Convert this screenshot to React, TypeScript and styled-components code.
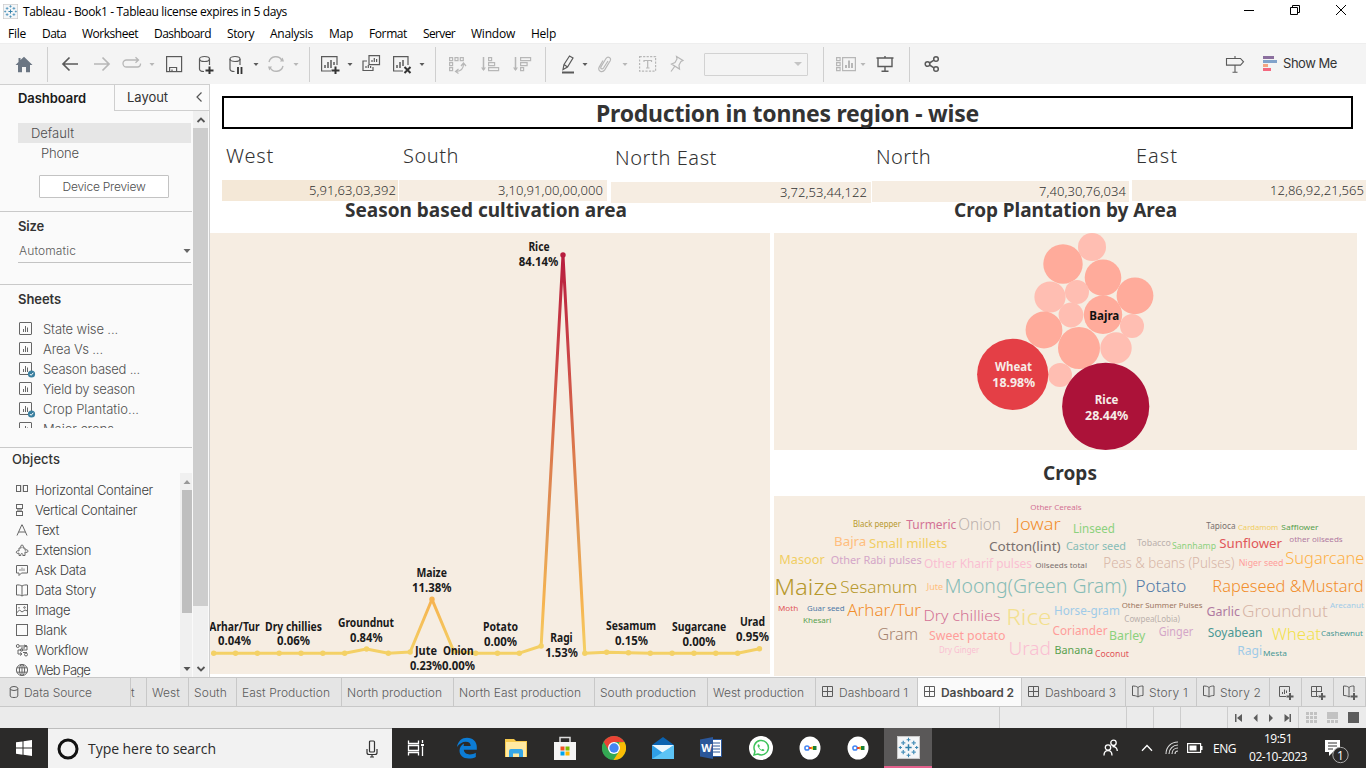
import React, { useLayoutEffect, useRef } from "react";
import styled, { createGlobalStyle } from "styled-components";

const UI = `"Inter", "Roboto", sans-serif`;
const VIZ = `"Noto Sans", "Open Sans", sans-serif`;
const WIN = `"Open Sans", "Noto Sans", sans-serif`;

const Global = createGlobalStyle`
  * { box-sizing: border-box; }
  body { margin: 0; background: #fff; font-family: ${UI}; overflow: hidden; }
  svg { display: block; flex: none; }
`;

/* Text tracked so that it fills a given width. */
const Tracked = styled.span`
  display: inline-block;
  white-space: pre;
  flex: none;
`;
function Fit({ w, children }: { w: number; children: string }) {
  const ref = useRef<HTMLSpanElement>(null);
  useLayoutEffect(() => {
    const el = ref.current;
    if (!el) return;
    el.style.letterSpacing = "0px";
    const natural = el.getBoundingClientRect().width;
    el.style.letterSpacing = `${(w - natural) / children.length}px`;
  }, [w, children]);
  return <Tracked ref={ref}>{children}</Tracked>;
}

const Screen = styled.div`
  width: 1366px;
  height: 768px;
  display: flex;
  flex-direction: column;
  overflow: hidden;
  background: #fff;
`;

/* ---------- title bar and menu ---------- */
const TitleBar = styled.header`
  height: 23px;
  flex: none;
  display: flex;
  align-items: center;
  padding-left: 3px;
  font: 12px ${WIN};
  color: #000;
`;
const TitleText = styled.div`
  margin-left: 5px;
  flex: 1;
`;
const WindowButtons = styled.div`
  display: flex;
  gap: 34px;
  padding: 0 19px 3px 0;
`;
const MenuBar = styled.nav`
  height: 20px;
  flex: none;
  display: flex;
  align-items: center;
  padding: 2px 0 0 8px;
  font: 12px ${WIN};
  color: #000;
`;
const MenuItem = styled.div<{ $w: number }>`
  width: ${(p) => p.$w}px;
  line-height: 18px;
`;
const menu: [string, number, number][] = [
  ["File", 34, 18], ["Data", 40, 24], ["Worksheet", 72, 56], ["Dashboard", 73, 57], ["Story", 43, 27],
  ["Analysis", 59, 43], ["Map", 40, 24], ["Format", 54, 38], ["Server", 48, 32], ["Window", 60, 44], ["Help", 40, 25],
];

/* ---------- toolbar ---------- */
const ToolBar = styled.div`
  height: 41px;
  flex: none;
  background: #f4f4f4;
  border-top: 1px solid #eee;
  display: flex;
  align-items: center;
`;
const Tool = styled.div<{ $ml: number; $dim?: boolean }>`
  margin-left: ${(p) => p.$ml}px;
  color: ${(p) => (p.$dim ? "#b7b7b7" : "#5a5a5a")};
  flex: none;
`;
const Rule = styled.div<{ $ml: number }>`
  margin-left: ${(p) => p.$ml}px;
  width: 1px;
  height: 35px;
  background: #cfcfcf;
  flex: none;
`;
const Combo = styled.div`
  margin-left: 17px;
  width: 104px;
  height: 23px;
  border: 1px solid #d2d2d2;
  border-radius: 1px;
  display: flex;
  align-items: center;
  justify-content: flex-end;
  padding-right: 5px;
  color: #c4c4c4;
  flex: none;
`;
const ShowMe = styled.div`
  margin-left: 6px;
  padding-bottom: 2px;
  font: 13px ${UI};
  color: #333;
`;
const Arrow = ({ ml, dim }: { ml: number; dim?: boolean }) => (
  <Tool $ml={ml} $dim={dim}>
    <svg width="8" height="20" viewBox="0 0 8 20"><path d="M1.5 9h5L4 12z" fill="currentColor" /></svg>
  </Tool>
);
function Icon({ ml, dim, sw = 1.2, children }: { ml: number; dim?: boolean; sw?: number; children: React.ReactNode }) {
  return (
    <Tool $ml={ml} $dim={dim}>
      <svg width="20" height="20" viewBox="0 0 20 20" fill="none" stroke="currentColor" strokeWidth={sw}>{children}</svg>
    </Tool>
  );
}

/* ---------- main split ---------- */
const Main = styled.div`
  height: 593px;
  flex: none;
  display: flex;
`;
const SidePane = styled.aside`
  width: 210px;
  flex: none;
  background: #fafafa;
  border-right: 1px solid #cfcfcf;
  border-top: 1px solid #cfcfcf;
  display: flex;
  flex-direction: column;
  font: 350 13px ${UI};
  color: #4e4e4e;
`;
const PaneTabs = styled.div`
  display: flex;
  height: 26px;
  flex: none;
`;
const PaneTab = styled.div<{ $active?: boolean }>`
  width: ${(p) => (p.$active ? "114px" : "95px")};
  padding: 0 6px 1px ${(p) => (p.$active ? 18 : 12)}px;
  display: flex;
  align-items: center;
  justify-content: space-between;
  font-weight: ${(p) => (p.$active ? 600 : 400)};
  color: ${(p) => (p.$active ? "#1a1a1a" : "#333")};
  border-left: ${(p) => (p.$active ? 0 : "1px solid #cfcfcf")};
  border-bottom: ${(p) => (p.$active ? 0 : "1px solid #cfcfcf")};
`;
const PaneBody = styled.div`
  display: flex;
  flex: 1;
  min-height: 0;
`;
const PaneContent = styled.div`
  width: 192px;
  flex: none;
  overflow: hidden;
`;
const PaneScroll = styled.div`
  width: 15px;
  margin-left: 1px;
  background: #f0f0f0;
  display: flex;
  flex-direction: column;
  color: #555;
`;
const ScrollThumb = styled.div<{ $h: number; $c: string }>`
  height: ${(p) => p.$h}px;
  background: ${(p) => p.$c};
`;
const ScrollEnd = styled.div<{ $h: number }>`
  height: ${(p) => p.$h}px;
  display: flex;
  align-items: center;
  justify-content: center;
`;
const Section = styled.section<{ $h: number }>`
  height: ${(p) => p.$h}px;
  border-bottom: 1px solid #c9c9c9;
  overflow: hidden;
`;
const Devices = styled.div`
  margin: 12px 1px 0 18px;
`;
const DeviceRow = styled.div<{ $on?: boolean }>`
  height: 20px;
  line-height: 20px;
  padding-left: ${(p) => (p.$on ? 13 : 23)}px;
  background: ${(p) => (p.$on ? "#e6e6e6" : "transparent")};
`;
const PreviewButton = styled.button`
  display: block;
  width: 130px;
  height: 23px;
  margin: 12px 0 0 39px;
  padding: 0 0 1px;
  border: 1px solid #c3c3c3;
  border-radius: 1px;
  background: #fff;
  font: 350 12px ${UI};
  color: #4e4e4e;
`;
const Heading = styled.div<{ $ml: number; $h?: number; $soft?: boolean }>`
  margin-left: ${(p) => p.$ml}px;
  height: ${(p) => p.$h ?? 29}px;
  line-height: ${(p) => (p.$soft ? 23 : 29)}px;
  font-weight: ${(p) => (p.$soft ? 500 : 600)};
  color: #333;
`;
const SizeSelect = styled.div`
  margin-left: 18px;
  width: 173px;
  height: 22px;
  border-bottom: 1px solid #c3c3c3;
  display: flex;
  align-items: center;
  justify-content: space-between;
  padding: 0 0 2px 1px;
  font-size: 12px;
  color: #5a5a5a;
`;
const SheetList = styled.div`
  margin: 5px 0 0 18px;
  height: 109px;
  overflow: hidden;
`;
const SheetRow = styled.div`
  height: 20px;
  display: flex;
  align-items: center;
  gap: 7px;
  color: #505050;
`;
const ObjectsArea = styled.div`
  display: flex;
  height: 204px;
  justify-content: space-between;
`;
const ObjectList = styled.div`
  padding: 7px 0 0 15px;
`;
const ObjectRow = styled.div`
  height: 20px;
  display: flex;
  align-items: center;
  gap: 6px;
  color: #3c3c3c;
`;
const InnerScroll = styled.div`
  width: 12px;
  background: #f0f0f0;
  padding-left: 2px;
  color: #999;
`;

/* ---------- dashboard canvas ---------- */
const Canvas = styled.main`
  flex: 1;
  display: flex;
  flex-direction: column;
  font-family: ${VIZ};
  overflow: hidden;
`;
const DashTitle = styled.h1`
  margin: 12px 13px 0 12px;
  height: 33px;
  flex: none;
  border: 2px solid #000;
  display: flex;
  align-items: center;
  justify-content: center;
  font-size: 23px;
  font-weight: 700;
  color: #333;
`;
const Regions = styled.div`
  height: 72px;
  flex: none;
  padding-left: 12px;
  display: flex;
`;
const Region = styled.div<{ $w: number; $dy: number }>`
  width: ${(p) => p.$w}px;
  flex: none;
  padding-top: ${(p) => p.$dy}px;
`;
const RegionName = styled.div`
  height: 51px;
  line-height: 54px;
  padding-left: 4px;
  font-size: 20px;
  font-weight: 300;
  color: #333;
`;
const RegionValue = styled.div<{ $w: number; $pr: number; $c: string }>`
  width: ${(p) => p.$w}px;
  height: 21px;
  padding-right: ${(p) => p.$pr}px;
  background: ${(p) => p.$c};
  text-align: right;
  line-height: 21px;
  font-size: 13px;
  font-weight: 350;
  color: #333;
`;
const Charts = styled.div`
  flex: 1;
  display: flex;
  gap: 4px;
  min-height: 0;
`;
const ChartColumn = styled.div<{ $w: number }>`
  width: ${(p) => p.$w}px;
  flex: none;
  display: flex;
  flex-direction: column;
`;
const ChartTitle = styled.h2<{ $h: number; $pl: number; $lh: number }>`
  margin: 0;
  height: ${(p) => p.$h}px;
  line-height: ${(p) => p.$lh}px;
  padding-left: ${(p) => p.$pl}px;
  font-size: 19px;
  font-weight: 700;
  color: #333;
`;

type Lbl = [string, number, number, number];
const lineLabels: Lbl[] = [
  ["Rice", 528.4, 549.6, 251], ["84.14%", 518.8, 558.4, 266],
  ["Arhar/Tur", 209.3, 259.7, 630.5], ["0.04%", 218, 251, 645],
  ["Dry chillies", 265, 322, 630.5], ["0.06%", 277, 310, 645],
  ["Groundnut", 338, 394, 627.3], ["0.84%", 350, 382.5, 642],
  ["Maize", 416.4, 447, 577.3], ["11.38%", 412, 451.5, 592.3],
  ["Jute", 415, 437, 655.3], ["0.23%", 410, 442, 670],
  ["Onion", 443, 473.5, 655.3], ["0.00%", 442, 475, 670],
  ["Potato", 483, 518, 631.3], ["0.00%", 484, 517, 646],
  ["Ragi", 550.3, 572.7, 642.3], ["1.53%", 545.2, 577.8, 657.3],
  ["Sesamum", 606, 656.2, 630.3], ["0.15%", 615, 648, 645],
  ["Sugarcane", 672, 726.3, 631.3], ["0.00%", 682.6, 715.6, 646],
  ["Urad", 740, 765, 626.3], ["0.95%", 736, 769, 641],
];
const level: Record<number, number> = { 7: 649, 9: 652, 10: 599.3, 11: 651.5, 15: 646, 16: 255, 18: 652.3, 19: 652.8, 25: 648.7 };
const points = Array.from({ length: 26 }, (_, i) => [213.7 + 21.83 * i, level[i] ?? 653.2]);

function LineChart() {
  return (
    <svg width="560" height="441" viewBox="210 233 560 441">
      <defs>
        <linearGradient id="heat" gradientUnits="userSpaceOnUse" x1="0" x2="0" y1="653" y2="255">
          <stop offset="0" stopColor="#f4d166" />
          <stop offset=".13" stopColor="#f6b350" />
          <stop offset=".3" stopColor="#e29b57" />
          <stop offset=".5" stopColor="#dc7a4c" />
          <stop offset=".75" stopColor="#cb4447" />
          <stop offset="1" stopColor="#b71d3e" />
        </linearGradient>
      </defs>
      <rect x="210" y="233" width="560" height="441" fill="#f6ede2" />
      <polyline points={points.map((p) => p.join(",")).join(" ")} fill="none" stroke="url(#heat)" strokeWidth="3" strokeLinejoin="round" />
      {points.map(([x, y], i) => (
        <circle key={i} cx={x} cy={y} r="2.7" fill={y < 300 ? "#b71d3e" : y < 620 ? "#f6b350" : "#f4d166"} />
      ))}
      {lineLabels.map(([t, a, b, y], i) => (
        <text key={i} x={a} y={y} textLength={b - a} lengthAdjust="spacingAndGlyphs" fontSize="11.6" fontWeight="700" fill="#1a1a1a">{t}</text>
      ))}
    </svg>
  );
}

const bubbles: [number, number, number, string][] = [
  [1092, 247, 14, "#ffbeb2"], [1063, 264, 19.7, "#ffab9b"], [1103, 277.7, 18.3, "#ffab9b"], [1135, 295.8, 18.4, "#ffab9b"],
  [1050, 297, 15.6, "#ffbeb2"], [1077, 292, 12, "#ffbeb2"], [1071, 315, 12.4, "#ffbeb2"], [1103, 314.8, 19.2, "#ffab9b"],
  [1132, 326, 12, "#ffbeb2"], [1044, 330, 18.4, "#ffab9b"], [1079, 348, 21, "#ffab9b"], [1116, 348, 15.7, "#ffbeb2"],
  [1060, 375, 12, "#ffbeb2"], [1012.7, 374.3, 35.6, "#e43f46"], [1105.7, 406.4, 43.6, "#ac1239"],
];
const bubbleLabels: [string, number, number, number, string][] = [
  ["Bajra", 1089.3, 1119.3, 320.3, "#111"], ["Wheat", 995, 1032, 371, "#f6ece8"], ["18.98%", 992.3, 1035.3, 387.3, "#f6ece8"],
  ["Rice", 1094.7, 1118.5, 404.3, "#f6ece8"], ["28.44%", 1085, 1128.3, 420.3, "#f6ece8"],
];
function BubbleChart() {
  return (
    <svg width="583" height="217" viewBox="774 233 583 217">
      <rect x="774" y="233" width="583" height="217" fill="#f6ede2" />
      {bubbles.map(([x, y, r, c], i) => <circle key={i} cx={x} cy={y} r={r} fill={c} />)}
      {bubbleLabels.map(([t, a, b, y, c], i) => (
        <text key={i} x={a} y={y} textLength={b - a} lengthAdjust="spacingAndGlyphs" fontSize="12.3" fontWeight="700" fill={c}>{t}</text>
      ))}
    </svg>
  );
}

type Word = [string, number, number, number, number, string];
const words: Word[] = [
  ["Other Cereals", 1030.3, 1081.7, 509.8, 7.6, "#d37295"],
  ["Black pepper", 853, 901, 527.3, 8, "#b6992d"], ["Turmeric", 906.3, 956.3, 529, 12.3, "#d37295"],
  ["Onion", 958.3, 1001, 530, 16.5, "#bab0ac"], ["Jowar", 1015.3, 1060.7, 530, 16.5, "#f28e2b"],
  ["Linseed", 1073, 1115, 532.9, 12.3, "#8cd17d"], ["Tapioca", 1206.3, 1235.5, 529.3, 8.4, "#79706e"],
  ["Cardamom", 1238, 1278.3, 530, 7.8, "#f1ce63"], ["Safflower", 1281.3, 1318.5, 530, 7.8, "#59a14f"],
  ["Bajra", 834, 866.3, 546.3, 13.2, "#ffbe7d"], ["Small millets", 869, 947.3, 547.8, 12.8, "#f1ce63"],
  ["Cotton(lint)", 989, 1060.7, 551, 13, "#79706e"], ["Castor seed", 1066, 1126, 550, 11.6, "#86bcb6"],
  ["Tobacco", 1137, 1171, 546, 9.4, "#bab0ac"], ["Sannhamp", 1172, 1216, 548.8, 9.4, "#8cd17d"],
  ["Sunflower", 1219.3, 1282, 548, 13, "#e15759"], ["other oilseeds", 1289.3, 1342.7, 541.8, 7.6, "#b07aa1"],
  ["Masoor", 779.3, 824.7, 563.8, 13, "#f1ce63"], ["Other Rabi pulses", 830.7, 921.7, 563.8, 11.4, "#d4a6c8"],
  ["Other Kharif pulses", 924, 1032, 567.8, 12, "#fabfd2"], ["Oilseeds total", 1035.3, 1087, 568, 7.6, "#79706e"],
  ["Peas & beans (Pulses)", 1103.3, 1234.5, 568, 13.8, "#d7b5a6"], ["Niger seed", 1238.7, 1283.5, 566, 9.6, "#ff9d9a"],
  ["Sugarcane", 1285.3, 1364.3, 564, 16.8, "#fdb046"],
  ["Maize", 774.2, 837.7, 594.8, 22.5, "#b6992d"], ["Sesamum", 840.3, 917.3, 592.8, 17, "#b6992d"],
  ["Jute", 926.7, 943, 589.8, 8, "#ffbe7d"], ["Moong(Green Gram)", 944.5, 1126.9, 593.4, 19.3, "#86bcb6"],
  ["Potato", 1135.4, 1186.3, 592.4, 16.2, "#4e79a7"], ["Rapeseed &Mustard", 1212.3, 1363.5, 592, 16.8, "#f28e2b"],
  ["Moth", 778, 798.2, 610.8, 7.6, "#e15759"], ["Guar seed", 807, 844.5, 610.8, 7.6, "#4e79a7"],
  ["Khesari", 803, 831.2, 622.8, 7.6, "#59a14f"], ["Arhar/Tur", 847.3, 921, 615.8, 16.5, "#f28e2b"],
  ["Dry chillies", 923.5, 1000.5, 621, 14.8, "#d37295"], ["Rice", 1006.3, 1051.5, 625.4, 22, "#f3e08e"],
  ["Horse-gram", 1054, 1119.9, 615, 11.8, "#a0cbe8"], ["Other Summer Pulses", 1121.7, 1202.5, 607.8, 7.6, "#9c755f"],
  ["Cowpea(Lobia)", 1124.3, 1180, 622, 8, "#bab0ac"], ["Garlic", 1206.4, 1239.9, 616, 12, "#b07aa1"],
  ["Groundnut", 1242, 1327.9, 617, 17, "#d7b5a6"], ["Arecanut", 1330, 1363.9, 607.8, 7.6, "#a0cbe8"],
  ["Gram", 877.4, 918, 640, 16.5, "#a5836f"], ["Sweet potato", 929, 1005.5, 640, 12.2, "#ff9d9a"],
  ["Coriander", 1052.5, 1107.5, 635, 12, "#ff9d9a"], ["Barley", 1109, 1145.2, 640, 12.6, "#8cd17d"],
  ["Ginger", 1158.7, 1193.2, 636.4, 12, "#d4a6c8"], ["Soyabean", 1207.7, 1262.5, 636.8, 12.4, "#499894"],
  ["Wheat", 1271.7, 1320.9, 640.4, 17, "#f2e14c"], ["Cashewnut", 1321, 1362.9, 635.8, 7.8, "#499894"],
  ["Dry Ginger", 939, 979.2, 653, 8.2, "#fabfd2"], ["Urad", 1008.5, 1051, 654.8, 18.5, "#fabfd2"],
  ["Banana", 1054.5, 1093, 654.4, 11.6, "#59a14f"], ["Coconut", 1095, 1128.9, 656.7, 9, "#e15759"],
  ["Ragi", 1237.3, 1262.2, 655, 12.8, "#a0cbe8"], ["Mesta", 1263, 1286.9, 655.5, 7.8, "#499894"],
];
function WordCloud() {
  return (
    <svg width="591" height="180" viewBox="774 496 591 180">
      <rect x="774" y="496" width="591" height="180" fill="#f6ede2" />
      {words.map(([t, a, b, y, s, c]) => (
        <text key={t} x={a} y={y} textLength={b - a} lengthAdjust="spacingAndGlyphs" fontSize={s} fontWeight={s < 13.5 ? 400 : 350} fill={c}>{t}</text>
      ))}
    </svg>
  );
}

/* ---------- sheet tabs and status ---------- */
const TabStrip = styled.div`
  height: 30px;
  flex: none;
  display: flex;
  border-top: 1px solid #c8c8c8;
  border-bottom: 1px solid #c8c8c8;
  background: #e5e5e5;
  font: 350 12px ${UI};
`;
const Tab = styled.div<{ $w: number; $pl: number; $on?: boolean; $gap?: number }>`
  width: ${(p) => p.$w}px;
  padding-left: ${(p) => p.$pl}px;
  flex: none;
  display: flex;
  align-items: center;
  gap: ${(p) => p.$gap ?? 2}px;
  overflow: hidden;
  border-right: 1px solid #c8c8c8;
  color: ${(p) => (p.$on ? "#4a4a4a" : "#5c5c5c")};
  font-weight: ${(p) => (p.$on ? 600 : 350)};
  background: ${(p) => (p.$on ? "#fafafa" : "transparent")};
`;
const Status = styled.div`
  height: 21px;
  flex: none;
  background: #ebebeb;
  display: flex;
  justify-content: flex-end;
`;
const StatusCell = styled.div<{ $w: number }>`
  width: ${(p) => p.$w}px;
  border-left: 1px solid #cdcdcd;
  display: flex;
  align-items: center;
  justify-content: center;
`;

/* ---------- taskbar ---------- */
const TaskBar = styled.footer`
  height: 40px;
  flex: none;
  display: flex;
  background: #2b2a29;
  color: #fff;
  font: 12px ${WIN};
`;
const TaskSlot = styled.div<{ $w: number; $on?: boolean }>`
  width: ${(p) => p.$w}px;
  flex: none;
  display: flex;
  align-items: center;
  justify-content: center;
  background: ${(p) => (p.$on ? "#5a5858" : "transparent")};
  border-bottom: ${(p) => (p.$on ? "2px solid #e3608c" : "0")};
`;
const SearchBox = styled.div`
  width: 344px;
  flex: none;
  background: #f2f2f2;
  border-top: 1px solid #bdbdbd;
  display: flex;
  align-items: center;
  padding: 0 14px 0 9px;
  color: #2b2b2b;
  font-size: 14px;
`;
const SearchText = styled.div`
  flex: 1;
  margin-left: 9px;
`;
const Clock = styled.div`
  width: 72px;
  display: flex;
  flex-direction: column;
  align-items: center;
  justify-content: center;
  line-height: 18px;
`;

const TableauMark = ({ size }: { size: number }) => {
  const plus = (x: number, y: number, r: number, c: string, sw = 1) => (
    <path key={`${x}-${y}`} d={`M${x - r} ${y}h${2 * r}M${x} ${y - r}v${2 * r}`} stroke={c} strokeWidth={sw} />
  );
  return (
    <svg width={size} height={size} viewBox="0 0 22 22">
      <rect x=".5" y=".5" width="21" height="21" fill="#f4f6f8" stroke="#c9c9c9" />
      {plus(11, 11, 3, "#2f7fa8", 1.4)}
      {plus(6, 6.5, 2, "#4d93bb", 1.2)}{plus(16, 6.5, 2, "#4d93bb", 1.2)}
      {plus(6, 15.5, 2, "#4d93bb", 1.2)}{plus(16, 15.5, 2, "#4d93bb", 1.2)}
      {plus(11, 3.5, 1.8, "#3a86b0")}{plus(11, 18.5, 1.8, "#3a86b0")}
      {plus(3.2, 11, 1.5, "#3a86b0")}{plus(18.8, 11, 1.5, "#3a86b0")}
    </svg>
  );
};

const SheetIcon = ({ used }: { used?: boolean }) => (
  <svg width="18" height="18" viewBox="0 0 18 18" fill="none" stroke="#666">
    <rect x="1.5" y="2.5" width="12" height="12" rx=".5" />
    <path d="M5.5 12V9M7.5 12V6M9.5 12V7.5" />
    {used && <><circle cx="13.5" cy="14" r="3.6" fill="#3a7f9f" stroke="none" /><path d="M11.8 14l1.3 1.3 2.2-2.5" stroke="#fff" /></>}
  </svg>
);

const objectIcons: Record<string, React.ReactNode> = {
  h: <><rect x="1.5" y="2.5" width="4" height="6" /><rect x="8.5" y="2.5" width="4" height="6" /><path d="M7 2v7" stroke="#bbb" /></>,
  v: <><rect x="1.5" y="1.5" width="6" height="4" /><rect x="1.5" y="8.5" width="6" height="4" /><path d="M2 7h5" stroke="#aaa" strokeWidth="2" /></>,
  t: <path d="M2 12.5L6.8 1.8h.4L12 12.5M3.8 9h6.4" />,
  e: <path d="M4 5h2.200c-.8-1.200-.5-3 .8-3s1.800 1.600.9 3H10v2.300c1.200-1 3-.6 3 .8s-1.700 1.700-3 .8V12.500H7.800c.2-1.300-.2-2-1-2s-1.200.8-1 2H4V10c-1.200.8-2.700.4-2.700-.8S2.800 7.400 4 8z" />,
  a: <><path d="M1.500 2.500h11v7.500H6.500L4 12.500V10H1.500z" /><path d="M5 8V6M7 8V4.500M9 8V5.500" stroke="#aaa" strokeWidth="1.500" /></>,
  s: <path d="M7 3v10M7 3C5.500 2 3.500 1.800 1.500 2v10c2 0 4-.2 5.500 1 1.500-1.200 3.500-1 5.500-1V2c-2-.2-4 0-5.500 1z" />,
  i: <><rect x="1.500" y="1.500" width="11" height="11" /><path d="M1.500 10l3-3 2.500 2 3-2 2.500 1" /><circle cx="9.500" cy="4.500" r=".8" /><path d="M4 4v1.500" /></>,
  b: <rect x="1.500" y="1.500" width="11" height="11" />,
  w: <><circle cx="2.800" cy="3" r="1.500" /><circle cx="11" cy="11.500" r="1.500" /><path d="M4.500 3H12v4H3v4h3M6 5h4M8 9.500h4M9 2l3 1-3 1" /><circle cx="6.500" cy="7" r="1.200" /><path d="M5 9.500l2 1.500-2 1.500" /></>,
  p: <><circle cx="7" cy="7" r="5.600" /><ellipse cx="7" cy="7" rx="2.600" ry="5.600" /><path d="M1.800 4.800h10.400M1.800 9.200h10.400M7 1.400v11.200" /></>,
};
const objects: [string, string, number][] = [
  ["h", "Horizontal Container", 118], ["v", "Vertical Container", 102], ["t", "Text", 24], ["e", "Extension", 56], ["a", "Ask Data", 51],
  ["s", "Data Story", 61], ["i", "Image", 35], ["b", "Blank", 32], ["w", "Workflow", 53], ["p", "Web Page", 55],
];
const sheets: [string, number, boolean][] = [
  ["State wise ...", 75, false], ["Area Vs ...", 60, false], ["Season based ...", 97, true],
  ["Yield by season", 92, false], ["Crop Plantatio...", 96, true], ["Major crops", 71, false],
];

const GridGlyph = ({ add }: { add?: boolean }) => (
  <svg width="16" height="16" viewBox="0 0 16 16" fill="none" stroke="#5c5c5c">
    <path d="M1.500 2.500h10v10h-10zM6.500 2.500v10M1.500 7.500h10" />
    {add && <><rect x="8" y="8" width="8" height="8" fill="#e5e5e5" stroke="none" /><path d="M12 9v7M8.500 12.500h7" strokeWidth="2" /></>}
  </svg>
);
const BookGlyph = ({ add }: { add?: boolean }) => (
  <svg width="16" height="16" viewBox="0 0 16 16" fill="none" stroke="#5c5c5c">
    <path d="M7 3.500v9.500M7 3.500C5.500 2.200 3.500 2 1.500 2v9.500c2 0 4 .3 5.500 1.500 1.500-1.200 3-1.500 5-1.500V2c-2 0-3.500.2-5 1.500z" />
    {add && <><rect x="8" y="8" width="8" height="8" fill="#e5e5e5" stroke="none" /><path d="M12 9v7M8.500 12.500h7" strokeWidth="2" /></>}
  </svg>
);

const plainTabs: [string, number, number, number][] = [
  ["West", 42, 5, 28], ["South", 48, 5, 33], ["East Production", 105, 5, 88], ["North production", 112, 5, 95],
  ["North East production", 141, 5, 122], ["South production", 113, 5, 96], ["West production", 108, 5, 91],
];

export default function App() {
  return (
    <Screen>
      <Global />
      <TitleBar>
        <TableauMark size={15} />
        <TitleText><Fit w={264}>Tableau - Book1 - Tableau license expires in 5 days</Fit></TitleText>
        <WindowButtons>
          <svg width="12" height="12" viewBox="0 0 12 12"><path d="M1 6.500h10" stroke="#000" /></svg>
          <svg width="12" height="12" viewBox="0 0 12 12" fill="none" stroke="#000"><path d="M1.500 3.500h7v7h-7zM3.500 3V1.500h7v7H9" /></svg>
          <svg width="12" height="12" viewBox="0 0 12 12"><path d="M1 1l10 10M11 1L1 11" stroke="#000" /></svg>
        </WindowButtons>
      </TitleBar>
      <MenuBar>{menu.map(([t, w, tw]) => <MenuItem key={t} $w={w}><Fit w={tw}>{t}</Fit></MenuItem>)}</MenuBar>

      <ToolBar>
        <Icon ml={14}><path d="M10 2.700L18.500 11H16v7.300h-4V13H8v5.300H4V11H1.500L4.500 8V4h2v2z" fill="#6b7683" stroke="none" /></Icon>
        <Rule $ml={13} />
        <Icon ml={12} sw={1.700}><path d="M9.500 3.500L3 10l6.500 6.500M3 10h15" /></Icon>
        <Icon ml={12} dim sw={1.700}><path d="M10.500 3.500L17 10l-6.500 6.500M17 10H2" /></Icon>
        <Icon ml={10} dim sw={1.300}><path d="M12 6H4.500a3 3 0 000 7h11a3 3 0 003-3.500M9 6h7M13.500 3.300L16.500 6l-3 2.800" /></Icon>
        <Arrow ml={6} dim />
        <Icon ml={8}><rect x="2.600" y="2.600" width="15" height="15" /><path d="M5.600 17.500v-4h7v4M8 17.500v-2" /></Icon>
        <Icon ml={12}><ellipse cx="8.500" cy="5" rx="5" ry="2.500" /><path d="M3.500 5v10c0 1.500 2 2.500 4.500 2.500M13.500 5v6" /><path d="M13.500 12.500v8M9.500 16.500h8" stroke="#333" strokeWidth="2" /></Icon>
        <Icon ml={10}><ellipse cx="9" cy="5" rx="5" ry="2.500" /><path d="M4 5v10c0 1.500 2 2.500 4.500 2.500M14 5v6" /><path d="M12 13v7M15.500 13v7" stroke="#333" strokeWidth="1.800" /></Icon>
        <Arrow ml={6} />
        <Icon ml={6} dim sw={1.400}><path d="M3 8a7 7 0 0113-1.500M17 12a7 7 0 01-13 1.500" /><path d="M14 7.500h4l-1.300-4zM6 12.500H2l1.300 4z" fill="currentColor" stroke="none" /></Icon>
        <Arrow ml={6} dim />
        <Rule $ml={9} />
        <Icon ml={10}><path d="M17 11V2.600H1.600V17H11" /><path d="M5 14v-3M8 14V8M11 14V6M14 11V8" strokeWidth="1.500" /><path d="M15.500 12.500v8M11.500 16.500h8" stroke="#333" strokeWidth="2" /></Icon>
        <Arrow ml={6} />
        <Icon ml={7}><path d="M8 1.600h10.500v9H8zM11 8V6M13.300 8V4M15.600 8V5M6 7H2v9.500h10V13M5 14v-2M7.300 14v-3M9.600 14v-2" /></Icon>
        <Icon ml={11}><path d="M16 11V2.600H1.600V17H11" /><path d="M5 14v-3M8 14V8M11 12V6" strokeWidth="1.500" /><path d="M12.500 13l6 6M18.500 13l-6 6" stroke="#333" strokeWidth="2" /></Icon>
        <Arrow ml={6} />
        <Rule $ml={9} />
        <Icon ml={11} dim><path d="M2.600 3.600h3v3h-3zM8 3.600h3v3H8zM13.300 3.600h3v3h-3zM2.600 8.600h3v3h-3zM2.600 13.600h3v3h-3z" /><path d="M16.500 10c0 5-3 7-7 7.500M14 12l2.500-3 2.500 3M11.500 15l-3 2.500 3 2" /></Icon>
        <Icon ml={13} dim><path d="M3.500 3v13" strokeWidth="1.500" /><path d="M1 13.500h5L3.500 17z" fill="currentColor" stroke="none" /><path d="M8.600 3.600h3v3h-3zM8.600 8.600h6v3h-6zM8.600 13.600h10v3h-10z" /></Icon>
        <Icon ml={12} dim><path d="M3.500 3v13" strokeWidth="1.500" /><path d="M1 13.500h5L3.500 17z" fill="currentColor" stroke="none" /><path d="M8.600 3.600h10v3h-10zM8.600 8.600h6.500v3H8.600zM8.600 13.600h3v3h-3z" /></Icon>
        <Rule $ml={13} />
        <Icon ml={12}><path d="M6 10.500L11.500 2l3.500 2-5.500 9-4.500 2.500zM6 10.500l3.500 2.500" /><path d="M4 18.500h12" strokeWidth="2" /></Icon>
        <Arrow ml={3} />
        <Icon ml={6} dim><path d="M13 7l-4.500 7c-1.300 1.800-3.500.6-2.500-1.200L11 4.500c1.800-2.800 5.800-.8 4.200 2.200l-5.500 9.200c-2.500 3.500-7.500 1-5.500-2.800L8 6.500" /></Icon>
        <Arrow ml={6} dim />
        <Icon ml={9} dim><rect x="1.600" y="2.600" width="16" height="14.500" strokeDasharray="2.200 1.300" /><path d="M6 8V6.500h7.500V8M9.700 6.500V14M8 14h3.500" /></Icon>
        <Icon ml={9} dim><path d="M9.500 2.500l6.500 4-2 1-2 3.500.5 4-8-5 3.500-1.500 2-3.500zM8 12l-4 5.500" /></Icon>
        <Combo><svg width="8" height="6" viewBox="0 0 8 6"><path d="M0 1h8L4 5z" fill="currentColor" /></svg></Combo>
        <Rule $ml={15} />
        <Icon ml={12} dim><path d="M.6 3.600h3.500v3H.6zM.6 8.600h3.500v3H.6zM.6 13.600h3.500v3H.6zM6.600 3.600h12.800v13H6.600z" /><path d="M10 14v-3M13 14V6.500M16 14V9" strokeWidth="2" /></Icon>
        <Arrow ml={3} dim />
        <Icon ml={8} sw={1.400}><path d="M1.500 4h17M3 4v8.500h14V4M10 12.500V17M6.500 17.300h7M10 2v2" /></Icon>
        <Rule $ml={14} />
        <Icon ml={12} sw={1.500}><circle cx="5.500" cy="10" r="2.300" /><circle cx="14" cy="5" r="2.300" /><circle cx="14" cy="15" r="2.300" /><path d="M7.500 9L12 6.200M7.500 11l4.500 2.800" /></Icon>
        <Icon ml={283} sw={1.100}><path d="M1.500 4.500h14l3 3.300-3 3.300h-14zM10 2v2.500M10 11v7M7.500 18.300h5" /></Icon>
        <Tool $ml={18}>
          <svg width="14" height="16" viewBox="0 0 14 16">
            <rect y="0" width="11" height="3" fill="#8b6f9e" /><rect y="4" width="14" height="3" fill="#82a3cb" />
            <rect y="8" width="5" height="3" fill="#f4a582" /><rect y="12" width="8" height="3" fill="#f4687f" />
          </svg>
        </Tool>
        <ShowMe><Fit w={54}>Show Me</Fit></ShowMe>
      </ToolBar>

      <Main>
        <SidePane>
          <PaneTabs>
            <PaneTab $active><Fit w={68}>Dashboard</Fit></PaneTab>
            <PaneTab>
              <Fit w={41}>Layout</Fit>
              <svg width="8" height="12" viewBox="0 0 8 12" fill="none" stroke="#555" strokeWidth="1.200"><path d="M6.500 1.500L2 6l4.500 4.500" /></svg>
            </PaneTab>
          </PaneTabs>
          <PaneBody>
            <PaneContent>
              <Section $h={101}>
                <Devices>
                  <DeviceRow $on><Fit w={43}>Default</Fit></DeviceRow>
                  <DeviceRow><Fit w={38}>Phone</Fit></DeviceRow>
                </Devices>
                <PreviewButton><Fit w={83}>Device Preview</Fit></PreviewButton>
              </Section>
              <Section $h={73}>
                <Heading $ml={18}><Fit w={26}>Size</Fit></Heading>
                <SizeSelect>
                  <Fit w={57}>Automatic</Fit>
                  <svg width="8" height="6" viewBox="0 0 8 6"><path d="M.5 1h7L4 5z" fill="#666" /></svg>
                </SizeSelect>
              </Section>
              <Section $h={163}>
                <Heading $ml={18}><Fit w={43}>Sheets</Fit></Heading>
                <SheetList>
                  {sheets.map(([t, w, used]) => <SheetRow key={t}><SheetIcon used={used} /><Fit w={w}>{t}</Fit></SheetRow>)}
                </SheetList>
              </Section>
              <Heading $ml={12} $h={25} $soft><Fit w={48}>Objects</Fit></Heading>
              <ObjectsArea>
                <ObjectList>
                  {objects.map(([k, t, w]) => (
                    <ObjectRow key={k}>
                      <svg width="14" height="14" viewBox="0 0 14 14" fill="none" stroke="#666">{objectIcons[k]}</svg>
                      <Fit w={w}>{t}</Fit>
                    </ObjectRow>
                  ))}
                </ObjectList>
                <InnerScroll>
                  <ScrollEnd $h={17}><svg width="8" height="5" viewBox="0 0 8 5"><path d="M.5 5h7L4 1z" fill="#999" /></svg></ScrollEnd>
                  <ScrollThumb $h={123} $c="#bfbfbf" />
                  <ScrollEnd $h={112}><svg width="8" height="5" viewBox="0 0 8 5"><path d="M.5 0h7L4 4z" fill="#555" /></svg></ScrollEnd>
                </InnerScroll>
              </ObjectsArea>
            </PaneContent>
            <PaneScroll>
              <ScrollEnd $h={17}><svg width="10" height="8" viewBox="0 0 10 8" fill="none" stroke="#555" strokeWidth="1.800"><path d="M1.500 6L5 2.500 8.500 6" /></svg></ScrollEnd>
              <ScrollThumb $h={478} $c="#cdcdcd" />
              <ScrollEnd $h={55} />
              <ScrollEnd $h={16}><svg width="10" height="8" viewBox="0 0 10 8" fill="none" stroke="#555" strokeWidth="1.800"><path d="M1.500 2L5 5.500 8.500 2" /></svg></ScrollEnd>
            </PaneScroll>
          </PaneBody>
        </SidePane>

        <Canvas>
          <DashTitle><Fit w={383}>Production in tonnes region - wise</Fit></DashTitle>
          <Regions>
            <Region $w={177} $dy={0}><RegionName><Fit w={48}>West</Fit></RegionName><RegionValue $w={176} $pr={2} $c="#f4e8d7"><Fit w={87}>5,91,63,03,392</Fit></RegionValue></Region>
            <Region $w={212} $dy={0}><RegionName><Fit w={56}>South</Fit></RegionName><RegionValue $w={208} $pr={4} $c="#f6ede2"><Fit w={105}>3,10,91,00,00,000</Fit></RegionValue></Region>
            <Region $w={261} $dy={2}><RegionName><Fit w={102}>North East</Fit></RegionName><RegionValue $w={260} $pr={4} $c="#f6ede2"><Fit w={87}>3,72,53,44,122</Fit></RegionValue></Region>
            <Region $w={260} $dy={1}><RegionName><Fit w={55}>North</Fit></RegionName><RegionValue $w={257} $pr={3} $c="#f6ede2"><Fit w={87}>7,40,30,76,034</Fit></RegionValue></Region>
            <Region $w={234} $dy={0}><RegionName><Fit w={42}>East</Fit></RegionName><RegionValue $w={234} $pr={2} $c="#f6ede2"><Fit w={94}>12,86,92,21,565</Fit></RegionValue></Region>
          </Regions>
          <Charts>
            <ChartColumn $w={560}>
              <ChartTitle $h={32} $pl={135} $lh={18}><Fit w={282}>Season based cultivation area</Fit></ChartTitle>
              <LineChart />
            </ChartColumn>
            <ChartColumn $w={592}>
              <ChartTitle $h={32} $pl={180} $lh={18}><Fit w={223}>Crop Plantation by Area</Fit></ChartTitle>
              <BubbleChart />
              <ChartTitle $h={46} $pl={269} $lh={46}><Fit w={54}>Crops</Fit></ChartTitle>
              <WordCloud />
            </ChartColumn>
          </Charts>
        </Canvas>
      </Main>

      <TabStrip>
        <Tab $w={131} $pl={9} $gap={5}>
          <svg width="10" height="14" viewBox="0 0 10 14" fill="none" stroke="#5c5c5c"><ellipse cx="5" cy="3.500" rx="3.800" ry="2" /><path d="M1.200 3.500v7.500c0 2 7.600 2 7.600 0V3.500" /></svg>
          <Fit w={68}>Data Source</Fit>
        </Tab>
        <Tab $w={16} $pl={0}><Fit w={5}>t</Fit></Tab>
        {plainTabs.map(([t, w, pl, tw]) => <Tab key={t} $w={w} $pl={pl}><Fit w={tw}>{t}</Fit></Tab>)}
        <Tab $w={102} $pl={5}><GridGlyph /><Fit w={69}>Dashboard 1</Fit></Tab>
        <Tab $w={104} $pl={5} $on><GridGlyph /><Fit w={73}>Dashboard 2</Fit></Tab>
        <Tab $w={104} $pl={5}><GridGlyph /><Fit w={71}>Dashboard 3</Fit></Tab>
        <Tab $w={71} $pl={5}><BookGlyph /><Fit w={39}>Story 1</Fit></Tab>
        <Tab $w={73} $pl={5}><BookGlyph /><Fit w={41}>Story 2</Fit></Tab>
        <Tab $w={32} $pl={8}>
          <svg width="16" height="16" viewBox="0 0 16 16" fill="none" stroke="#5c5c5c">
            <path d="M8 12.500H1.500v-10h10V8M4.500 10V8M6.500 10V5.500M8.500 9V6.500" /><path d="M12 9v7M8.500 12.500h7" strokeWidth="2" />
          </svg>
        </Tab>
        <Tab $w={32} $pl={8}><GridGlyph add /></Tab>
        <Tab $w={32} $pl={8}><BookGlyph add /></Tab>
      </TabStrip>
      <Status>
        <StatusCell $w={127} /><StatusCell $w={27} /><StatusCell $w={27} /><StatusCell $w={47} />
        <StatusCell $w={71}>
          <svg width="56" height="10" viewBox="0 0 56 10" fill="#5c5c5c">
            <path d="M0 1h1.500v8H0zM7 1v8L2 5zM22.500 1v8l-4-4zM34 1l4 4-4 4zM49.500 1l5 4-5 4zM54.500 1H56v8h-1.500z" />
          </svg>
        </StatusCell>
        <StatusCell $w={68}>
          <svg width="53" height="12" viewBox="0 0 53 12" fill="#c2c2c2">
            {[0, 4, 8].map((x) => [0, 4, 8].map((y) => <rect key={`${x}${y}`} x={x} y={y} width="3" height="3" />))}
            <rect x="21" y="0" width="11" height="7" />{[21, 25, 29].map((x) => <rect key={x} x={x} y="8" width="3" height="3" />)}
            <rect x="42" y="0" width="11" height="11" fill="#5c5c5c" />
          </svg>
        </StatusCell>
      </Status>

      <TaskBar>
        <TaskSlot $w={48}>
          <svg width="16" height="16" viewBox="0 0 16 16" fill="#fff"><path d="M0 2.300L6.500 1.400v6.200H0zM7.500 1.200L16 0v7.600H7.500zM0 8.500h6.500v6.200L0 13.700zM7.500 8.500H16V16l-8.500-1.200z" /></svg>
        </TaskSlot>
        <SearchBox>
          <svg width="22" height="22" viewBox="0 0 22 22"><circle cx="11" cy="11" r="9" fill="none" stroke="#111" strokeWidth="3" /></svg>
          <SearchText><Fit w={128}>Type here to search</Fit></SearchText>
          <svg width="12" height="18" viewBox="0 0 12 18" fill="none" stroke="#333" strokeWidth="1.200"><rect x="3.500" y="1" width="5" height="11" rx="1" /><path d="M1 9v3.500a2 2 0 002 2h6a2 2 0 002-2V9M6 14.500V17M4 17h4" /></svg>
        </SearchBox>
        <TaskSlot $w={48}>
          <svg width="18" height="18" viewBox="0 0 18 18" fill="none" stroke="#fff" strokeWidth="1.300"><path d="M1.500 1.500v3h10v-3M1.500 6.500h10v5h-10zM1.500 16.500v-3h10v3M15.500 1v3M15.500 7.500V17" /><path d="M14 6h3" strokeWidth="2" /></svg>
        </TaskSlot>
        <TaskSlot $w={54}>
          <svg width="22" height="22" viewBox="0 0 22 22"><path d="M1 10C2 4 6 .8 11 .8c6 0 9.800 4.200 9.800 9.200v2.800H7.800c.2 3 2.800 4.600 6 4.600 2.300 0 4.300-.6 6-1.600V20c-2 1.100-4.300 1.600-7 1.600-6 0-9.300-3.300-9.300-8 0-3.300 1.800-5.800 4.500-7.200-.2.600-.3 1.600-.3 2.600h7C14.700 6.300 13 4.800 9.800 4.800 6.500 4.800 3.200 6.800 1 10z" fill="#0c7cd5" /></svg>
        </TaskSlot>
        <TaskSlot $w={44}>
          <svg width="22" height="20" viewBox="0 0 22 20"><path d="M0 1h9l2 2h11v16H0z" fill="#f6c94d" /><path d="M1 4h20v15H1z" fill="#ffe9a2" /><path d="M4 19v-6q0-2 2-2h10q2 0 2 2v6h-4v-3.500H8V19z" fill="#35a7e8" /></svg>
        </TaskSlot>
        <TaskSlot $w={53}>
          <svg width="24" height="24" viewBox="0 0 24 24"><path d="M7 6V1.500h10V6" fill="none" stroke="#ddd" strokeWidth="1.500" /><path d="M1 6h22v18H1z" fill="#f4f4f4" /><path d="M7.500 10.500h4v4h-4z" fill="#f25022" /><path d="M12.500 10.500h4v4h-4z" fill="#7fba00" /><path d="M7.500 15.500h4v4h-4z" fill="#00a4ef" /><path d="M12.500 15.500h4v4h-4z" fill="#ffb900" /></svg>
        </TaskSlot>
        <TaskSlot $w={46}>
          <svg width="24" height="24" viewBox="0 0 24 24"><circle cx="12" cy="12" r="12" fill="#34a853" /><path d="M1.600 6A12 12 0 0122.400 6H12L7 15z" fill="#ea4335" /><path d="M22.400 6A12 12 0 0111.500 24L17.200 15 17 6.500z" fill="#fbbc05" /><path d="M1.600 6l5.400 9 5 3-3 5.600A12 12 0 011.600 6z" fill="#34a853" /><circle cx="12" cy="12" r="6" fill="#fff" /><circle cx="12" cy="12" r="4.700" fill="#4285f4" /></svg>
        </TaskSlot>
        <TaskSlot $w={52}>
          <svg width="24" height="24" viewBox="0 0 24 24"><path d="M1 9L12 1l11 8v13.500H1z" fill="#0a62b0" /><path d="M1 9h22v14H1z" fill="#2f9fe6" /><path d="M1 9h22L12 17z" fill="#eaf6fd" /><path d="M1 23L23 9v14z" fill="#5cc3f5" /></svg>
        </TaskSlot>
        <TaskSlot $w={44}>
          <svg width="22" height="22" viewBox="0 0 22 22"><rect x="11" y="2.500" width="10.500" height="17" fill="#fff" stroke="#2b579a" /><path d="M13 6h7M13 9h7M13 12h7M13 15h7" stroke="#2b579a" /><path d="M0 2.500L13 0v22L0 19.500z" fill="#2b579a" /><text x="6.500" y="15" fontSize="11" fontWeight="700" fill="#fff" textAnchor="middle">W</text></svg>
        </TaskSlot>
        <TaskSlot $w={56}>
          <svg width="24" height="24" viewBox="0 0 24 24"><circle cx="12" cy="12" r="12" fill="#fff" /><path d="M5 19l1-3.700a7.200 7.200 0 112.800 2.700z" fill="none" stroke="#3fc35c" strokeWidth="1.500" /><path d="M9 8.500c-1.200 1.200.2 3.300 1.600 4.700s3.500 2.500 4.700 1.300c.7-.8-1.600-2-2-1.500l-.8.700c-1-.4-2-1.400-2.400-2.400l.6-.7c.5-.6-.9-2.900-1.700-2.100z" fill="#3fc35c" /></svg>
        </TaskSlot>
        {[42, 53].map((w) => (
          <TaskSlot key={w} $w={w}>
            <svg width="22" height="24" viewBox="0 0 22 24"><ellipse cx="11" cy="12" rx="10.500" ry="11.500" fill="#fff" /><circle cx="8" cy="12" r="2.100" fill="none" stroke="#4285f4" strokeWidth="1.500" /><path d="M10 11h3v2h-3z" fill="#ea4335" /><path d="M12.500 10.500h2v3h-2z" fill="#fbbc05" /><path d="M14 10h3.500v4H14z" fill="#188038" /></svg>
          </TaskSlot>
        ))}
        <TaskSlot $w={48} $on><TableauMark size={23} /></TaskSlot>
        <TaskSlot $w={157} />
        <TaskSlot $w={44}>
          <svg width="16" height="18" viewBox="0 0 16 18" fill="none" stroke="#fff" strokeWidth="1.300"><circle cx="5" cy="8.500" r="2.700" /><path d="M1 16.500c0-6.500 8-6.500 8 0" /><circle cx="10.500" cy="3.800" r="2.700" /><path d="M9.500 7.500c3 0 4.800 1.800 4.800 4.500" /></svg>
        </TaskSlot>
        <TaskSlot $w={28}><svg width="12" height="8" viewBox="0 0 12 8" fill="none" stroke="#fff" strokeWidth="1.300"><path d="M1 6.800L6 1.500l5 5.300" /></svg></TaskSlot>
        <TaskSlot $w={22}>
          <svg width="14" height="14" viewBox="0 0 14 14" fill="none" stroke="#ddd" strokeWidth="1.100"><path d="M1 13C1 6 6 1 13 1M4 13c0-5 4-9 9-9M7 13c0-3.500 2.500-6 6-6M10 13c0-2 1-3 3-3" /></svg>
        </TaskSlot>
        <TaskSlot $w={24}>
          <svg width="16" height="10" viewBox="0 0 16 10"><rect x=".6" y=".6" width="13" height="8.800" fill="none" stroke="#fff" strokeWidth="1.200" /><path d="M2.500 2.500h7v5h-7zM14 3h1.500v4H14z" fill="#fff" /></svg>
        </TaskSlot>
        <TaskSlot $w={35}><Fit w={23}>ENG</Fit></TaskSlot>
        <Clock><Fit w={28}>19:51</Fit><Fit w={58}>02-10-2023</Fit></Clock>
        <TaskSlot $w={46}>
          <svg width="26" height="32" viewBox="0 0 26 32"><path d="M1 8h15v12H9l-4 4v-4H1z" fill="#fff" /><path d="M4 11h9M4 14h9M4 17h5" stroke="#333" /><circle cx="16.500" cy="23" r="7.700" fill="#2b2a29" stroke="#aaa" /><text x="16.500" y="27.500" fontSize="12" fill="#fff" textAnchor="middle">1</text></svg>
        </TaskSlot>
      </TaskBar>
    </Screen>
  );
}
